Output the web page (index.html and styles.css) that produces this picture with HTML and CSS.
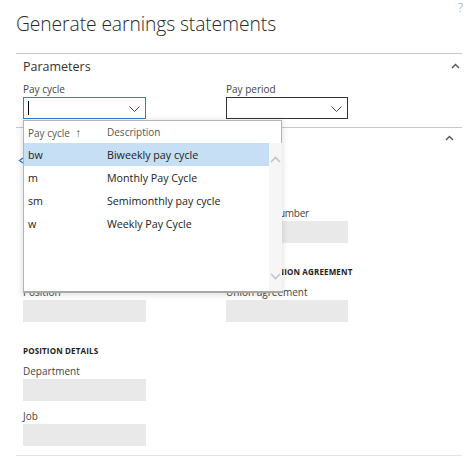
FILE: index.html
```html
<!DOCTYPE html>
<html>
<head>
<meta charset="utf-8">
<link rel="stylesheet" href="styles.css">
</head>
<body>
<div class="page">
  <div class="top">
    <h1 class="title">Generate earnings statements</h1>
    <span class="help">?</span>
  </div>

  <section class="section sec1">
    <div class="sec-head">
      <span class="sec-title">Parameters</span>
      <svg class="chev" width="9" height="6" viewBox="0 0 9 6"><path d="M1 5 L4.5 1.5 L8 5" fill="none" stroke="#555" stroke-width="1.4"/></svg>
    </div>
    <div class="row">
      <div class="field">
        <div class="label">Pay cycle</div>
        <div class="input active"><span class="caret"></span>
          <svg class="dd" width="11" height="6" viewBox="0 0 11 6"><path d="M0.5 0.5 L5.5 5.5 L10.5 0.5" fill="none" stroke="#444" stroke-width="1"/></svg>
        </div>
      </div>
      <div class="field">
        <div class="label">Pay period</div>
        <div class="input dark">
          <svg class="dd" width="11" height="6" viewBox="0 0 11 6"><path d="M0.5 0.5 L5.5 5.5 L10.5 0.5" fill="none" stroke="#444" stroke-width="1"/></svg>
        </div>
      </div>
    </div>
  </section>

  <section class="section sec2">
    <div class="sec-head head2">
      <span class="sec-title">Records to include</span>
      <svg class="chev" width="9" height="6" viewBox="0 0 9 6"><path d="M1 5 L4.5 1.5 L8 5" fill="none" stroke="#555" stroke-width="1.4"/></svg>
    </div>
    <svg class="bluemark" width="6" height="7" viewBox="0 0 6 7"><path d="M5 1 L1.5 3.5 L5 6" fill="none" stroke="#2b7cd3" stroke-width="1.4"/></svg>

    <div class="group g1">
      <div class="row">
        <div class="field"><div class="heading covered">WORKER</div><div class="label covered">Worker</div><div class="input gray"></div></div>
        <div class="field"><div class="heading">&nbsp;</div><div class="label pn">Personnel number</div><div class="input gray"></div></div>
      </div>
    </div>
    <div class="group">
      <div class="row">
        <div class="field"><div class="heading covered">POSITION</div><div class="label">Position</div><div class="input gray"></div></div>
        <div class="field"><div class="heading">EMPLOYEE UNION AGREEMENT</div><div class="label">Union agreement</div><div class="input gray"></div></div>
      </div>
    </div>
    <div class="group">
      <div class="field">
        <div class="heading">POSITION DETAILS</div>
        <div class="label">Department</div><div class="input gray"></div>
        <div class="label next">Job</div><div class="input gray"></div>
      </div>
    </div>
  </section>

  <div class="lookup">
    <div class="lk-head">
      <span class="c1">Pay cycle <span class="arrow">&#8593;</span></span>
      <span class="c2">Description</span>
    </div>
    <div class="lk-body">
      <div class="lk-rows">
        <div class="lk-row sel"><span class="c1">bw</span><span class="c2">Biweekly pay cycle</span></div>
        <div class="lk-row"><span class="c1">m</span><span class="c2">Monthly Pay Cycle</span></div>
        <div class="lk-row"><span class="c1">sm</span><span class="c2">Semimonthly pay cycle</span></div>
        <div class="lk-row"><span class="c1">w</span><span class="c2">Weekly Pay Cycle</span></div>
      </div>
      <div class="scroll">
        <svg width="11" height="7" viewBox="0 0 11 7"><path d="M1 6 L5.5 1.5 L10 6" fill="none" stroke="#c4c4c4" stroke-width="1.6"/></svg>
        <svg width="11" height="7" viewBox="0 0 11 7"><path d="M1 1 L5.5 5.5 L10 1" fill="none" stroke="#c4c4c4" stroke-width="1.6"/></svg>
      </div>
    </div>
  </div>
</div>
</body>
</html>
```

FILE: styles.css
```css
* { box-sizing: border-box; }
html, body { margin: 0; padding: 0; background: #fff; }
body {
  font-family: "Open Sans", "Noto Sans", sans-serif;
  color: #222;
  width: 470px;
  height: 456px;
  overflow: hidden;
}
.page {
  position: relative;
  padding: 0 8px 0 16px;
}
.top {
  display: flex;
  justify-content: space-between;
  align-items: flex-start;
  height: 53px;
}
.title {
  margin: 11px 0 0 0;
  font-weight: 300;
  font-size: 19.3px;
  line-height: 26px;
  color: #2a2a2a;
  letter-spacing: -0.1px;
}
.help {
  font-size: 12px;
  font-weight: 300;
  color: #888;
  line-height: 13px;
  margin-top: 1px;
  margin-right: -2px;
  padding-right: 1px;
}
.section {
  border-top: 1px solid #c8c8c8;
}
.sec-head {
  display: flex;
  justify-content: space-between;
  align-items: center;
  height: 22px;
  margin-top: 1px;
  padding-left: 7px;
  padding-right: 2px;
}
.sec-title {
  font-size: 12.5px;
  color: #333;
}
.sec1 { padding-bottom: 8px; }
.row {
  display: flex;
  padding-left: 7px;
}
.field {
  width: 203px;
  display: flex;
  flex-direction: column;
}
.label {
  font-size: 10px;
  line-height: 13px;
  height: 14px;
  color: #444;
  margin-top: 8px;
}
.sec1 .label { margin-top: 6px; }
.input {
  width: 123px;
  height: 22px;
  position: relative;
}
.input.active { border: 1px solid #2d7fd2; }
.input.dark { border: 1px solid #333; width: 122px; }
.input.gray { background: #e9e9e9; }
.field + .field .input { width: 122px; }
.caret {
  position: absolute;
  left: 4px;
  top: 3px;
  width: 1px;
  height: 14px;
  background: #000;
}
.dd {
  position: absolute;
  right: 5px;
  top: 8px;
}
.sec2 {
  position: relative;
  border-bottom: 1px solid #e4e4e4;
  padding-bottom: 9px;
}
.head2 { height: 17px; padding-right: 8px; margin-top: 1px; }
.head2 .sec-title { visibility: hidden; }
.covered { visibility: hidden; }
.pn { letter-spacing: -0.25px; }
.bluemark {
  position: absolute;
  left: 2px;
  top: 29px;
}
.group .row { padding-left: 7px; }
.group > .field { padding-left: 7px; }
.g1 { margin-top: 41px; }
.heading {
  font-size: 8px;
  font-weight: 700;
  line-height: 11px;
  height: 11px;
  color: #222;
  letter-spacing: 0.15px;
  margin-top: 23px;
}
.g1 .heading { margin-top: 0; }
.group .label { margin-top: 9px; }

.lookup {
  position: absolute;
  left: 23px;
  top: 120px;
  width: 259px;
  height: 173px;
  background: #fff;
  border: 1px solid #b4b4b4;
  border-bottom: 2px solid #a8a8a8;
  box-shadow: 0 1px 5px 2px rgba(0,0,0,0.09);
  display: flex;
  flex-direction: column;
}
.lk-head {
  height: 22px;
  display: flex;
  align-items: center;
  font-size: 10px;
  color: #555;
  flex-shrink: 0;
}
.c1 { width: 83px; padding-left: 4px; }
.c2 { flex: 1; }
.arrow { font-size: 11.5px; font-weight: 300; margin-left: 3px; color: #555; }
.lk-body {
  flex: 1;
  display: flex;
}
.lk-rows { flex: 1; }
.lk-row {
  height: 23px;
  display: flex;
  align-items: center;
  font-size: 10.7px;
  color: #222;
}
.lk-row.sel { background: #c7dff4; }
.scroll {
  width: 13px;
  background: #f6f6f6;
  display: flex;
  flex-direction: column;
  justify-content: space-between;
  align-items: center;
  padding: 13px 0 11px;
  margin-right: -1px;
}
.scroll svg { display: block; }
```
